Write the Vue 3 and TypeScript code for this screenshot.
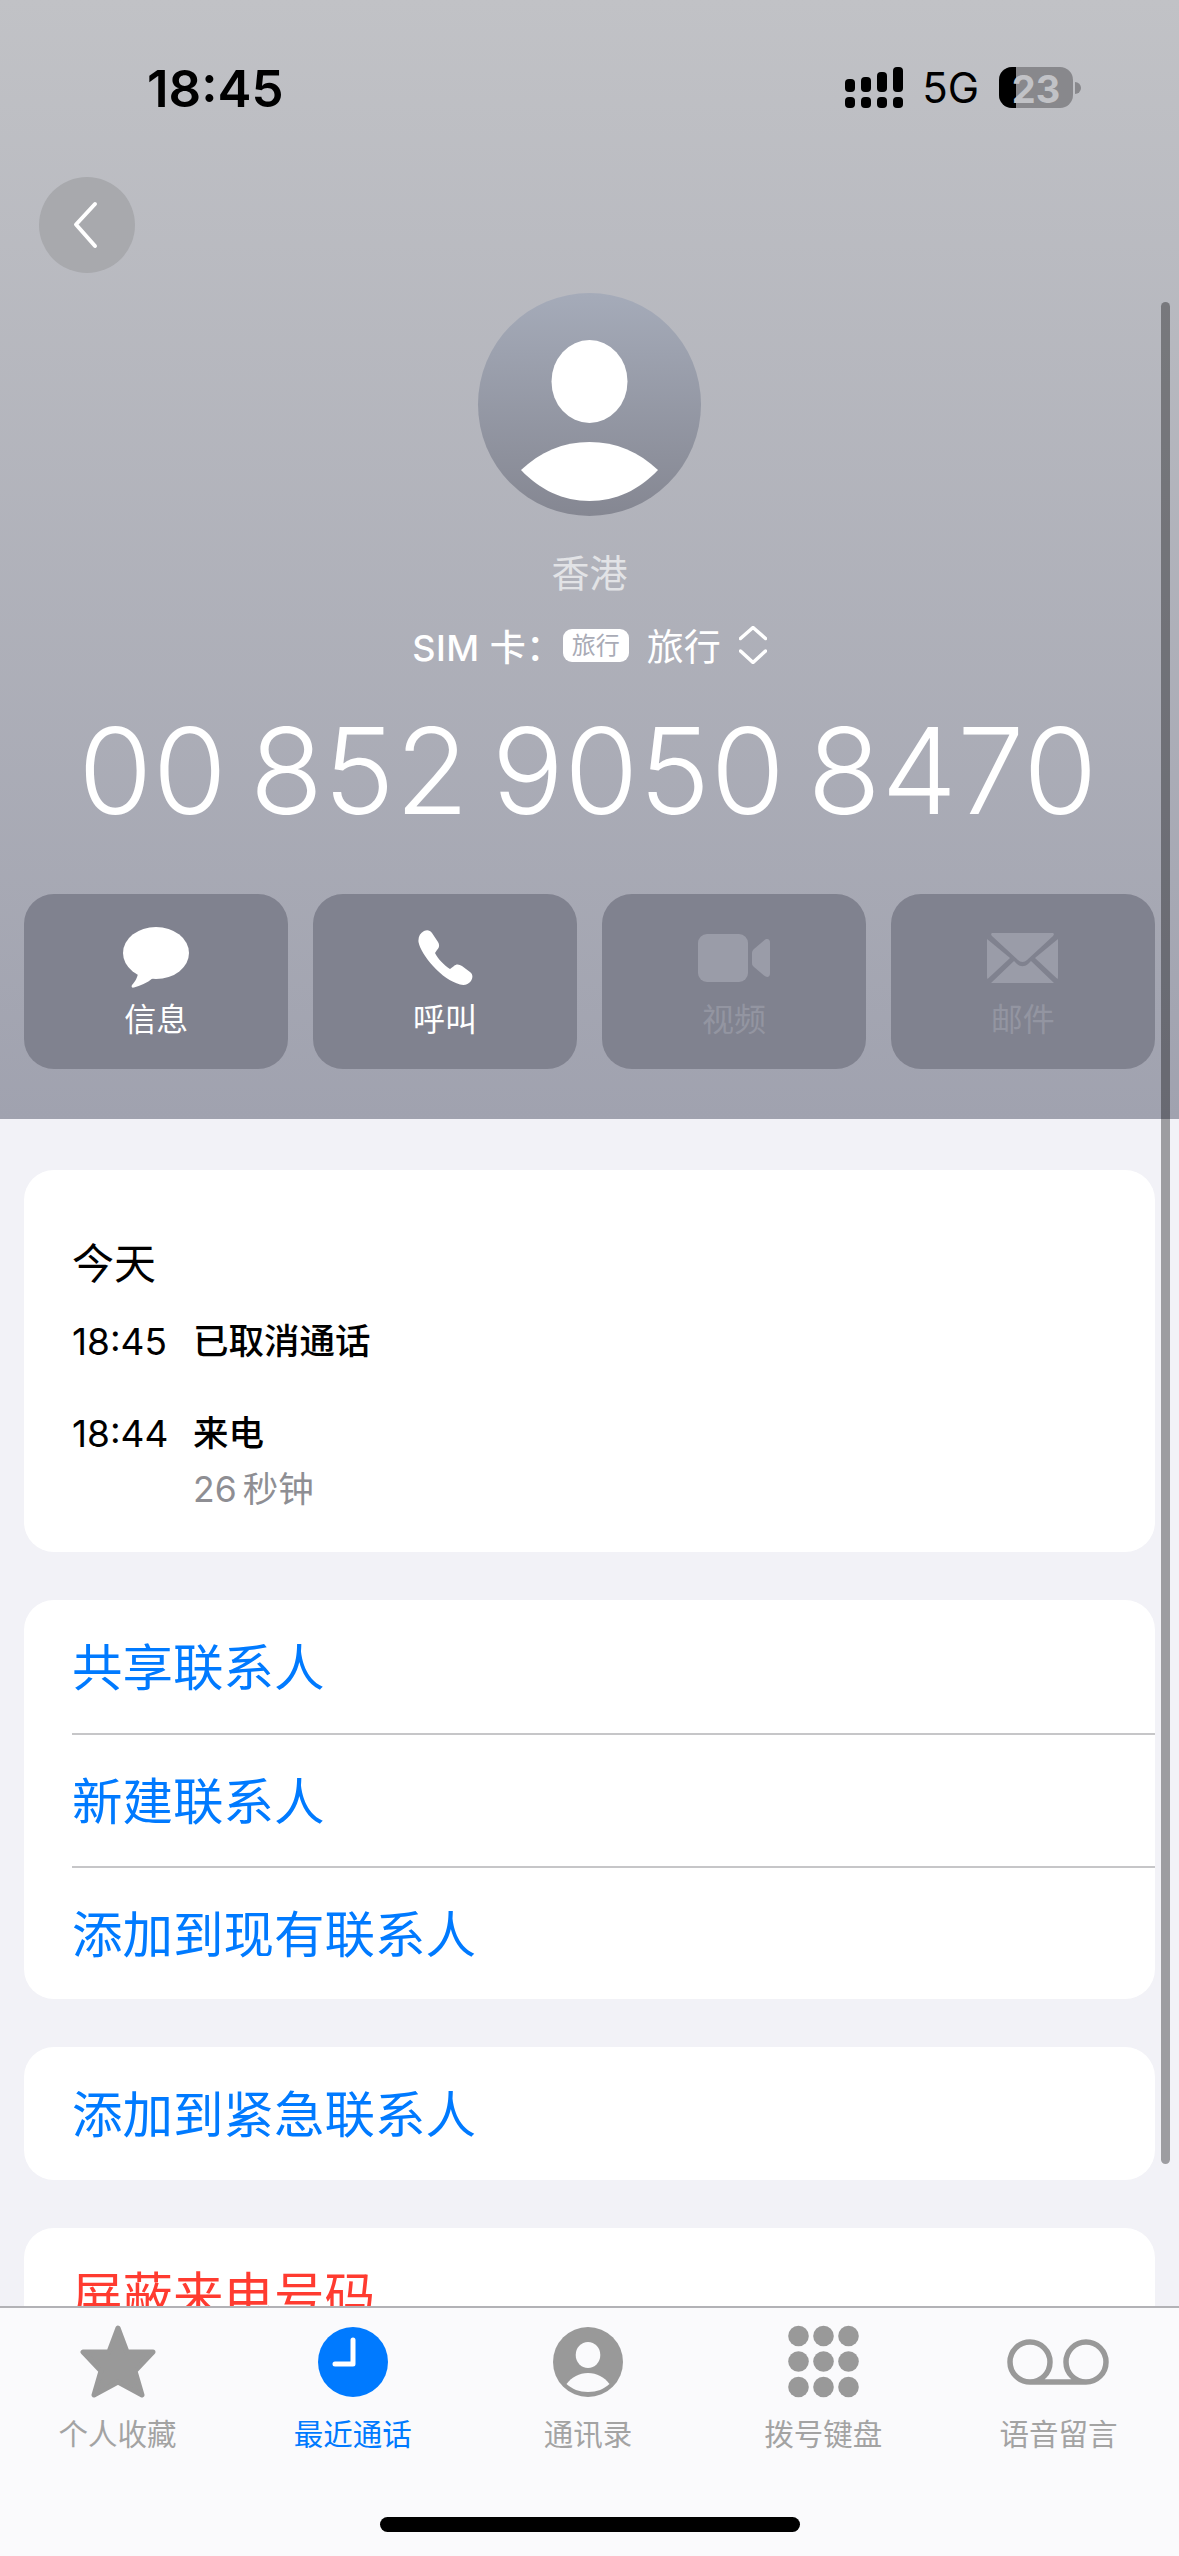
<script setup lang="ts">
const actions = [
  { name: "message", label: "信息", off: false },
  { name: "phone", label: "呼叫", off: false },
  { name: "video", label: "视频", off: true },
  { name: "mail", label: "邮件", off: true },
];

const tabs = [
  { name: "star", label: "个人收藏", active: false },
  { name: "clock", label: "最近通话", active: true },
  { name: "person", label: "通讯录", active: false },
  { name: "keypad", label: "拨号键盘", active: false },
  { name: "voicemail", label: "语音留言", active: false },
];

const keypadDots = [12, 37.5, 63].flatMap((y) =>
  [10.5, 35.5, 60.5].map((x) => ({ x, y })),
);

const contactActions = ["共享联系人", "新建联系人", "添加到现有联系人"];
</script>

<template>
  <div class="phone">
    <header class="hero">
      <div class="status">
        <span class="clock">18:45</span>
        <div class="status-right">
          <svg class="signal" width="58" height="41" viewBox="0 0 58 41">
            <rect x="0" y="12" width="10" height="13" rx="4" />
            <rect x="16" y="10" width="10" height="15" rx="4" />
            <rect x="32" y="5" width="10" height="20" rx="4" />
            <rect x="48" y="0" width="10" height="25" rx="4" />
            <rect x="0" y="30" width="10" height="11" rx="4" />
            <rect x="16" y="30" width="10" height="11" rx="4" />
            <rect x="32" y="30" width="10" height="11" rx="4" />
            <rect x="48" y="30" width="10" height="11" rx="4" />
          </svg>
          <span class="net">5G</span>
          <div class="battery">
            <span class="battery-level"></span>
            <span class="battery-text">23</span>
          </div>
          <span class="battery-tip"></span>
        </div>
      </div>

      <div class="back">
        <svg width="30" height="48" viewBox="0 0 30 48">
          <path d="M23 3 L4 23.5 L23 45" fill="none" stroke="#fff" stroke-width="4" stroke-linecap="round" stroke-linejoin="round" />
        </svg>
      </div>

      <div class="avatar">
        <svg width="223" height="223" viewBox="0 0 223 223">
          <ellipse cx="111.5" cy="88.5" rx="38" ry="41.5" fill="#fff" />
          <path d="M43 177 C62 159 85 149 111.5 149 C138 149 161 159 180 177 C161 197 138 208 111.5 208 C85 208 62 197 43 177 Z" fill="#fff" />
        </svg>
      </div>

      <div class="region">香港</div>

      <div class="sim">
        <span class="sim-label">SIM 卡：</span>
        <span class="sim-badge">旅行</span>
        <span class="sim-name">旅行</span>
        <svg width="28" height="38" viewBox="0 0 28 38">
          <path d="M1.5 12.5 L14 1.5 L26.5 12.5 M1.5 25 L14 36.5 L26.5 25" fill="none" stroke="#fff" stroke-width="3.5" stroke-linecap="round" stroke-linejoin="round" />
        </svg>
      </div>

      <div class="number">00 852 9050 8470</div>

      <div class="actions">
        <div v-for="a in actions" :key="a.name" class="action" :class="{ off: a.off }">
          <div class="action-icon">
            <svg v-if="a.name === 'message'" width="66" height="61" viewBox="0 0 66 61">
              <ellipse cx="33" cy="26" rx="33" ry="26" />
              <path d="M16 42 C15 50 12 55 9 58 C8 60 9 61 11 60.5 C17 59 24 56 30 51 Z" />
            </svg>
            <svg v-else-if="a.name === 'phone'" width="55" height="55" viewBox="0 0 55 55">
              <path d="M6 1 C9 -0.5 12 0 14 3 L20 12 C22 15 21 18 19 20 L17 23 C20 29 26 35 32 39 L36 36 C38 34 41 34 44 36 L52 42 C55 44 55 48 53 51 C50 55 46 55.5 42 54.5 C33 52 23 45 15 36 C7 27 2 19 0.5 12 C0 7 2 3 6 1 Z" />
            </svg>
            <svg v-else-if="a.name === 'video'" width="72" height="48" viewBox="0 0 72 48">
              <rect x="0" y="0" width="50" height="48" rx="9" />
              <path d="M54 19 C54 17 55 16 56 15 L66 6.5 C69 4 72 5 72 8.5 V39.5 C72 43 69 44 66 41.5 L56 33 C55 32 54 31 54 29 Z" />
            </svg>
            <svg v-else width="71" height="50" viewBox="0 0 71 50">
              <path d="M6 0 H65 C67 0 67.5 1.5 66 3 L40 27 C37.5 29.5 33.5 29.5 31 27 L5 3 C3.5 1.5 4 0 6 0 Z" />
              <path d="M0 6 L23 25 L0.5 46 C0 45 0 44 0 43 Z" />
              <path d="M71 6 L48 25 L70.5 46 C71 45 71 44 71 43 Z" />
              <path d="M4 50 L27 28 L30 31 C33.5 34 37.5 34 41 31 L44 28 L67 50 Z" />
            </svg>
          </div>
          <span class="action-label">{{ a.label }}</span>
        </div>
      </div>
    </header>

    <main class="content">
      <section class="card calls">
        <div class="day">今天</div>
        <div class="call">
          <span class="call-time">18:45</span>
          <span class="call-type">已取消通话</span>
        </div>
        <div class="call second">
          <span class="call-time">18:44</span>
          <div>
            <div class="call-type">来电</div>
            <div class="call-length">26 秒钟</div>
          </div>
        </div>
      </section>

      <section class="card">
        <div v-for="text in contactActions" :key="text" class="row">
          <span>{{ text }}</span>
        </div>
      </section>

      <section class="card">
        <div class="row"><span>添加到紧急联系人</span></div>
      </section>

      <section class="card">
        <div class="row danger"><span>屏蔽来电号码</span></div>
      </section>
    </main>

    <div class="scrollbar"></div>

    <nav class="tabbar">
      <div class="tabs">
        <div v-for="t in tabs" :key="t.name" class="tab" :class="{ active: t.active }">
          <div class="tab-icon">
            <svg v-if="t.name === 'star'" width="76" height="73" viewBox="0 0 76 73">
              <path d="M38 3 L47 27 L73 27 L55 46 L62 70 L38 57 L14 70 L21 46 L3 27 L29 27 Z" stroke="#999" stroke-width="5" stroke-linejoin="round" />
            </svg>
            <svg v-else-if="t.name === 'clock'" width="70" height="70" viewBox="0 0 70 70">
              <circle cx="35" cy="35" r="35" fill="#007aff" />
              <path d="M35 13 V37 H17" fill="none" stroke="#fff" stroke-width="5" stroke-linecap="round" stroke-linejoin="round" />
            </svg>
            <svg v-else-if="t.name === 'person'" width="70" height="70" viewBox="0 0 70 70">
              <circle cx="35" cy="35" r="35" />
              <ellipse cx="35" cy="28" rx="12.3" ry="13" fill="#fafafc" />
              <path d="M13.5 57 C19 50 26 46 35 46 C44 46 51 50 56.5 57 C51 62 44 65 35 65 C26 65 19 62 13.5 57 Z" fill="#fafafc" />
            </svg>
            <svg v-else-if="t.name === 'keypad'" width="71" height="75" viewBox="0 0 71 75">
              <circle v-for="(d, i) in keypadDots" :key="i" :cx="d.x" :cy="d.y" r="10.3" />
            </svg>
            <svg v-else width="102" height="46" viewBox="0 0 102 46">
              <path d="M23 43 H79 M23 43 A20 20 0 1 1 23 3 A20 20 0 1 1 23 43 M79 43 A20 20 0 1 1 79 3 A20 20 0 1 1 79 43" fill="none" stroke="#999" stroke-width="5.5" />
            </svg>
          </div>
          <span class="tab-label">{{ t.label }}</span>
        </div>
      </div>
      <div class="home-bar"></div>
    </nav>
  </div>
</template>

<style>
html,
body {
  margin: 0;
  background: #f2f2f7;
}
</style>

<style scoped>
.phone {
  position: relative;
  width: 1179px;
  height: 2556px;
  overflow: hidden;
  background: #f2f2f7;
  font-family: Inter, "Noto Sans CJK SC", sans-serif;
}

.hero {
  height: 1119px;
  box-sizing: border-box;
  padding-top: 67px;
  display: flex;
  flex-direction: column;
  background: linear-gradient(180deg, #c1c2c6 0%, #a0a2af 100%);
}

.status {
  height: 41px;
  display: flex;
  align-items: center;
  justify-content: space-between;
  padding: 0 98px 0 147px;
}
.clock {
  padding-top: 2px;
  font-size: 51px;
  font-weight: 600;
  line-height: 41px;
  color: #000;
}
.status-right {
  display: flex;
  align-items: center;
}
.signal {
  fill: #000;
}
.net {
  margin-left: 19px;
  font-size: 42px;
  line-height: 41px;
  color: #000;
}
.battery {
  position: relative;
  margin-left: 20px;
  width: 74px;
  height: 41px;
  border-radius: 13px;
  background: #88888c;
  display: flex;
  align-items: center;
  justify-content: center;
}
.battery-level {
  position: absolute;
  left: 0;
  top: 0;
  bottom: 0;
  width: 17px;
  border-radius: 13px 0 0 13px;
  background: #000;
}
.battery-text {
  position: relative;
  padding-top: 2px;
  font-size: 38px;
  font-weight: 700;
  line-height: 38px;
  color: #c1c2c6;
}
.battery-tip {
  margin-left: 2px;
  width: 6px;
  height: 12px;
  border-radius: 0 6px 6px 0;
  background: #88888c;
}

.back {
  margin: 69px 0 0 39px;
  width: 96px;
  height: 96px;
  border-radius: 50%;
  background: #a8a9ad;
  display: flex;
  align-items: center;
  justify-content: center;
}

.avatar {
  align-self: center;
  margin-top: 20px;
  width: 223px;
  height: 223px;
  border-radius: 50%;
  background: linear-gradient(180deg, #a5abb9 0%, #858792 100%);
}
.avatar svg {
  display: block;
}

.region {
  margin-top: 30px;
  text-align: center;
  font-size: 38px;
  line-height: 54px;
  color: #e2e3e6;
}

.sim {
  margin-top: 20px;
  height: 50px;
  display: flex;
  align-items: center;
  justify-content: center;
  color: #fff;
  font-size: 36px;
  font-weight: 500;
}
.sim-label {
  letter-spacing: 0.5px;
}
.sim-badge {
  width: 66px;
  height: 33px;
  border-radius: 9px;
  background: #fff;
  color: #a9abb6;
  font-size: 24px;
  font-weight: 400;
  line-height: 33px;
  text-align: center;
}
.sim-name {
  margin: 0 18px 0 18px;
  font-size: 37px;
  font-weight: 400;
}

.number {
  margin-top: 36px;
  padding-right: 3px;
  text-align: center;
  font-size: 120px;
  font-weight: 300;
  letter-spacing: 0.5px;
  word-spacing: -12px;
  line-height: 130px;
  color: #fff;
  white-space: nowrap;
}

.actions {
  margin-top: 58px;
  padding: 0 24px;
  display: grid;
  grid-template-columns: repeat(4, 1fr);
  gap: 24.5px;
}
.action {
  height: 175px;
  border-radius: 30px;
  background: #80828f;
  color: #fff;
  fill: #fff;
  display: flex;
  flex-direction: column;
  align-items: center;
}
.action.off {
  color: #9395a1;
  fill: #9a9ca8;
}
.action-icon {
  margin-top: 33px;
  height: 61px;
  display: flex;
  align-items: center;
  justify-content: center;
}
.action-label {
  margin-top: 10px;
  font-size: 32px;
  line-height: 44px;
}

.content {
  padding: 51px 24px 0;
  display: flex;
  flex-direction: column;
  gap: 48px;
}
.card {
  border-radius: 30px;
  background: #fff;
}
.calls {
  height: 382px;
  box-sizing: border-box;
  padding: 66px 48px 0;
}
.day {
  font-size: 42px;
  line-height: 56px;
  color: #000;
}
.call {
  margin-top: 25px;
  display: flex;
  align-items: flex-start;
  font-size: 35.5px;
  line-height: 50px;
  color: #000;
}
.call.second {
  margin-top: 42px;
}
.call-time {
  width: 121px;
  font-size: 37px;
}
.call-type {
  font-weight: 500;
}
.call-length {
  margin-top: 6px;
  color: #8e8e93;
  word-spacing: -4px;
}

.row {
  margin-left: 48px;
  height: 132.5px;
  box-sizing: border-box;
  padding-bottom: 4px;
  display: flex;
  align-items: center;
  font-size: 50.5px;
  color: #007aff;
}
.row + .row {
  height: 133.25px;
  border-top: 2px solid #c6c6c8;
}
.row.danger {
  color: #ff3b30;
}

.scrollbar {
  position: absolute;
  left: 1161px;
  top: 302px;
  width: 9px;
  height: 1862px;
  border-radius: 5px;
  background: rgba(0, 0, 0, 0.35);
}

.tabbar {
  position: absolute;
  left: 0;
  right: 0;
  top: 2306px;
  bottom: 0;
  background: #fafafc;
  border-top: 2px solid #b2b2b6;
}
.tabs {
  display: grid;
  grid-template-columns: repeat(5, 1fr);
  padding-right: 3px;
}
.tab {
  display: flex;
  flex-direction: column;
  align-items: center;
  color: #a3a3a3;
  fill: #999;
}
.tab.active {
  color: #007aff;
}
.tab-icon {
  margin-top: 16px;
  height: 75px;
  display: flex;
  align-items: center;
  justify-content: center;
}
.tab-label {
  margin-top: 14px;
  font-size: 29.5px;
  line-height: 42px;
}
.home-bar {
  position: absolute;
  left: 380px;
  top: 209px;
  width: 420px;
  height: 15px;
  border-radius: 8px;
  background: #000;
}
</style>
